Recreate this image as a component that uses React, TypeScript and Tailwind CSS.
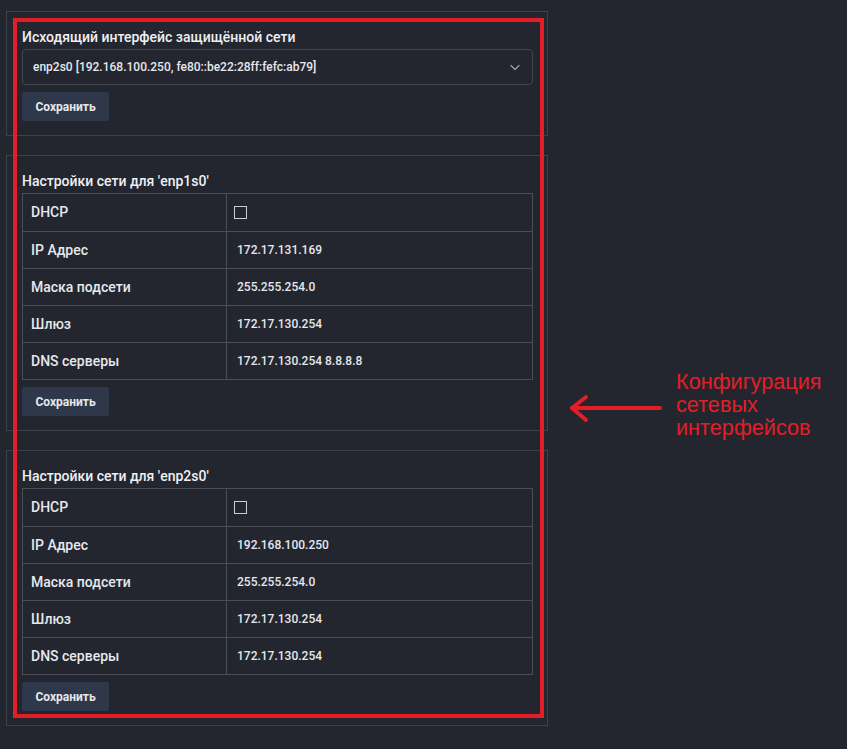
import React from "react";

const rows1 = [
  ["IP Адрес", "172.17.131.169"],
  ["Маска подсети", "255.255.254.0"],
  ["Шлюз", "172.17.130.254"],
  ["DNS серверы", "172.17.130.254 8.8.8.8"],
];
const rows2 = [
  ["IP Адрес", "192.168.100.250"],
  ["Маска подсети", "255.255.254.0"],
  ["Шлюз", "172.17.130.254"],
  ["DNS серверы", "172.17.130.254"],
];

function SaveButton() {
  return (
    <button className="w-[87px] h-[29px] bg-[#2f384a] text-[#e6e8ec] text-[12px] font-bold flex items-center justify-center rounded-[2px]">
      Сохранить
    </button>
  );
}

function NetTable({ rows }: { rows: string[][] }) {
  return (
    <div className="border border-[#4a4e59] flex flex-col">
      <div className="flex h-[37px]">
        <div className="w-[204px] border-r border-[#4a4e59] flex items-center pl-[8px] text-[14px] font-medium text-[#e6e8ec]">
          DHCP
        </div>
        <div className="flex-1 flex items-center pl-[7px]">
          <div className="w-[13px] h-[13px] border border-[#c9ccd2]" />
        </div>
      </div>
      {rows.map(([k, v]) => (
        <div key={k} className="flex h-[37px] border-t border-[#4a4e59]">
          <div className="w-[204px] border-r border-[#4a4e59] flex items-center pl-[8px] text-[14px] font-medium text-[#e6e8ec]">
            {k}
          </div>
          <div className="flex-1 flex items-center pl-[10px] text-[12px] font-medium text-[#e6e8ec]">
            {v}
          </div>
        </div>
      ))}
    </div>
  );
}

function NetPanel({ name, rows }: { name: string; rows: string[][] }) {
  return (
    <div className="border border-[#3d414c] pl-[15px] pr-[14px] pt-[13px] pb-[14px] flex flex-col">
      <div className="h-[24px] flex items-center text-[14px] font-medium text-[#eef0f3]">
        Настройки сети для '{name}'
      </div>
      <NetTable rows={rows} />
      <div className="mt-[7px]">
        <SaveButton />
      </div>
    </div>
  );
}

export default function App() {
  return (
    <div
      className="relative w-[847px] h-[749px] bg-[#23262f] overflow-hidden"
      style={{ fontFamily: "Roboto, 'Noto Sans', sans-serif" }}
    >
      <div className="pl-[6px] pt-[11px] w-[548px] flex flex-col gap-[19px]">
        <div className="border border-[#3d414c] pl-[15px] pr-[14px] pt-[13px] pb-[14px] flex flex-col">
          <div className="h-[24px] flex items-center text-[14px] font-medium text-[#eef0f3]">
            Исходящий интерфейс защищённой сети
          </div>
          <div className="h-[36px] border border-[#434753] rounded-[4px] flex items-center justify-between pl-[10px] pr-[11px]">
            <span className="text-[12px] font-medium text-[#e6e8ec]">
              enp2s0 [192.168.100.250, fe80::be22:28ff:fefc:ab79]
            </span>
            <svg width="12" height="12" viewBox="0 0 12 12" fill="none">
              <path d="M2 4.5l4 4 4-4" stroke="#9ca0a8" strokeWidth="1.2" strokeLinecap="round" strokeLinejoin="round" />
            </svg>
          </div>
          <div className="mt-[7px]">
            <SaveButton />
          </div>
        </div>
        <NetPanel name="enp1s0" rows={rows1} />
        <NetPanel name="enp2s0" rows={rows2} />
      </div>

      {/* annotation overlay */}
      <div className="absolute left-[13px] top-[18px] w-[531px] h-[700px] border-[4px] border-[#e41e26] pointer-events-none" />
      <svg className="absolute left-[566px] top-[392px]" width="100" height="34" viewBox="0 0 100 34" fill="none">
        <path d="M6 16H94" stroke="#e41e26" strokeWidth="4" strokeLinecap="round" />
        <path d="M20 5L6 16L20 28" stroke="#e41e26" strokeWidth="4" strokeLinecap="round" strokeLinejoin="round" />
      </svg>
      <div
        className="absolute left-[676px] top-[370px] text-[21.7px] leading-[23px] text-[#e41e26]"
        style={{ fontFamily: "'Liberation Sans', Arial, sans-serif" }}
      >
        Конфигурация
        <br />
        сетевых
        <br />
        интерфейсов
      </div>
    </div>
  );
}
